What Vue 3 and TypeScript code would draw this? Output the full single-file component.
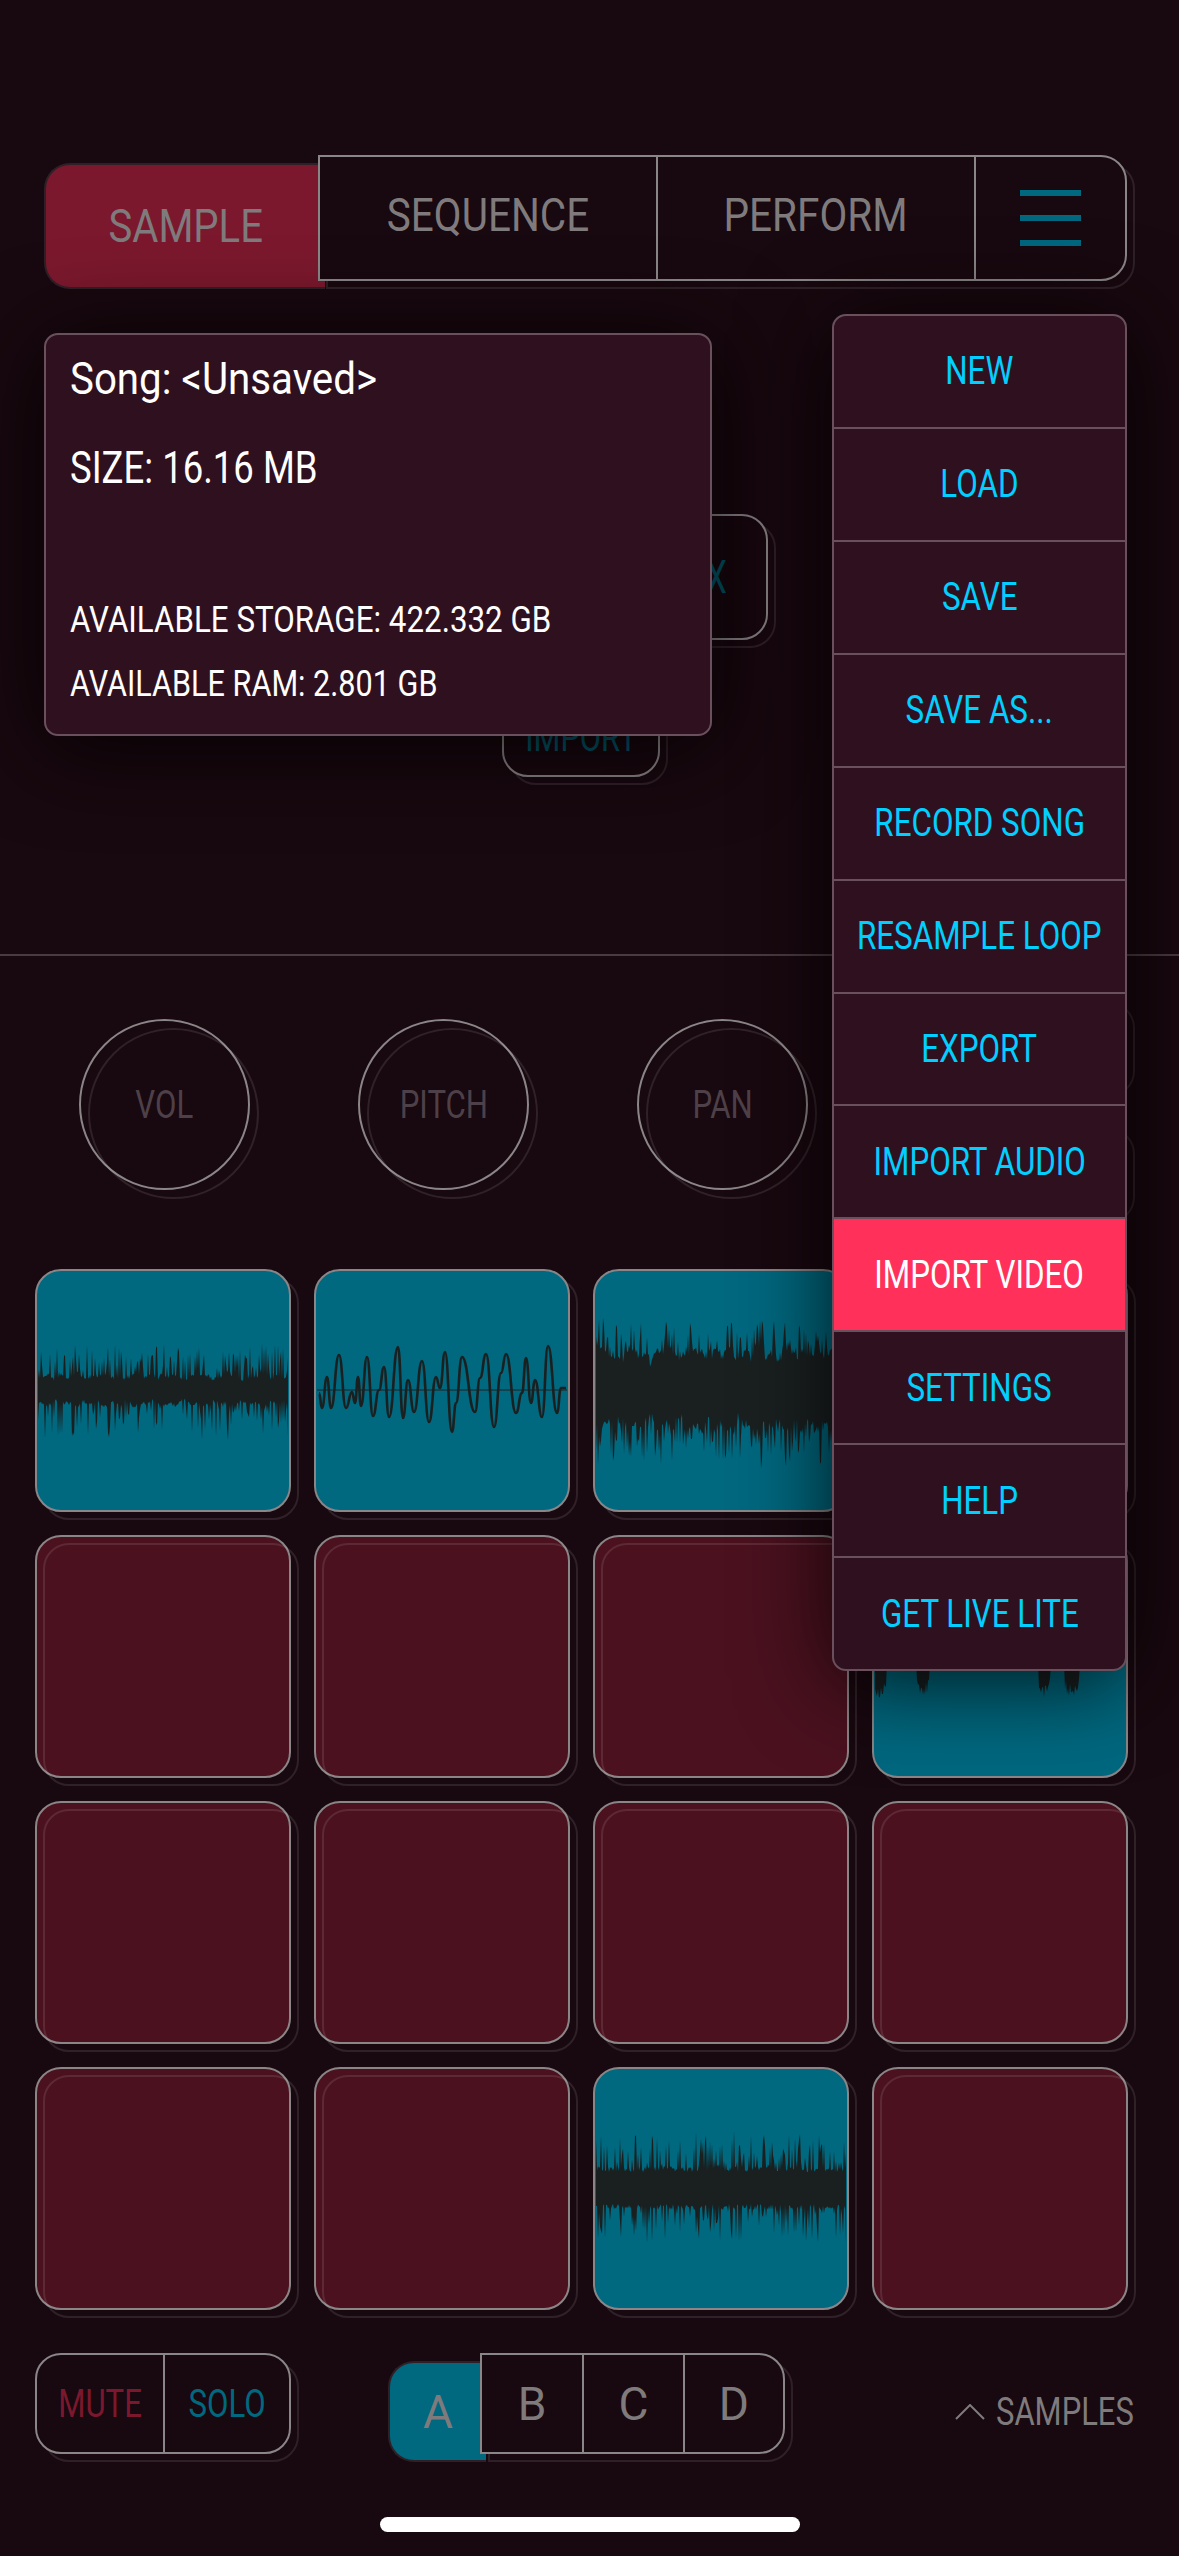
<template>
  <div class="app">
    <div class="top-row">
      <div class="sample-tab"><span class="t">SAMPLE</span></div>
      <div class="tabs outlined">
        <div class="tab tab-seq"><span class="t">SEQUENCE</span></div>
        <div class="tab tab-perf"><span class="t">PERFORM</span></div>
        <div class="tab tab-menu">
          <i></i>
          <i></i>
          <i></i>
        </div>
      </div>
    </div>

    <div class="tools">
      <div class="tool tool-x outlined"><span class="t">X</span></div>
      <div class="tool tool-import outlined"><span class="t">IMPORT</span></div>
    </div>

    <div class="divider"></div>

    <div class="knob-row">
      <div v-for="k in knobs" :key="k" class="knob"><span class="t">{{ k }}</span></div>
      <div class="side-btns">
        <div class="side-btn outlined"></div>
        <div class="side-btn outlined"></div>
      </div>
    </div>

    <div class="pads">
      <div v-for="(p, i) in pads" :key="i" class="pad" :class="p ? 'pad-on' : 'pad-off'">
        <svg v-if="p" class="wave" viewBox="2 2 252 239">
          <template v-if="p.line">
            <line x1="3" y1="121" x2="253" y2="121" stroke="#0f4350" stroke-width="2" />
            <path :d="p.line" fill="none" stroke="#1a2020" stroke-width="2.6" />
          </template>
          <path v-else :d="p.d" fill="#1a2020" />
        </svg>
      </div>
    </div>

    <div class="bottom-row">
      <div class="mute-solo outlined">
        <div class="ms-cell mute"><span class="t">MUTE</span></div>
        <div class="ms-cell solo"><span class="t">SOLO</span></div>
      </div>
      <div class="bank-a"><span>A</span></div>
      <div class="banks outlined">
        <div class="bank">B</div>
        <div class="bank">C</div>
        <div class="bank">D</div>
      </div>
      <div class="samples">
        <svg width="30" height="16" viewBox="0 0 30 16">
          <path d="M1 15 L15 1 L29 15" fill="none" stroke="#7f7b7d" stroke-width="2" />
        </svg>
        <span class="t">SAMPLES</span>
      </div>
    </div>

    <div class="home-bar"></div>

    <div class="song-panel">
      <div class="song-line song-name"><span class="t">Song: &lt;Unsaved&gt;</span></div>
      <div class="song-line size-line"><span class="t">SIZE: 16.16 MB</span></div>
      <div class="song-small storage-line"><span class="t">AVAILABLE STORAGE: 422.332 GB</span></div>
      <div class="song-small ram-line"><span class="t">AVAILABLE RAM: 2.801 GB</span></div>
    </div>

    <div class="menu">
      <div v-for="m in menuItems" :key="m" class="menu-item" :class="{ active: m === 'IMPORT VIDEO' }">
        <span class="t">{{ m }}</span>
      </div>
    </div>
  </div>
</template>

<script setup lang="ts">
type WaveOpts = {
  seed: number
  upCore: number
  downCore: number
  upSpike: number
  downSpike: number
  chance: number
  lump?: number
  hits?: number[][]
}

const knobs = ['VOL', 'PITCH', 'PAN']

const menuItems = [
  'NEW',
  'LOAD',
  'SAVE',
  'SAVE AS...',
  'RECORD SONG',
  'RESAMPLE LOOP',
  'EXPORT',
  'IMPORT AUDIO',
  'IMPORT VIDEO',
  'SETTINGS',
  'HELP',
  'GET LIVE LITE',
]

function makeRand(seed: number) {
  let s = seed
  return () => {
    s = (s * 16807) % 2147483647
    return s / 2147483647
  }
}

// upper edge left to right, then lower edge back again
function wavePath(o: WaveOpts) {
  const rand = makeRand(o.seed)
  const cy = 121
  const lump = o.lump ?? 0
  const p1 = rand() * 6
  const p2 = rand() * 6
  const up: string[] = []
  const down: string[] = []
  for (let x = 3; x <= 253; x++) {
    const slow = (Math.sin(x / 5 + p1) + Math.sin(x / 2.3 + p2)) / 2
    let u = o.upCore * (0.8 + rand() * 0.3) + lump * slow
    let d = o.downCore * (0.8 + rand() * 0.3) + lump * slow
    if (rand() < o.chance) u += rand() * o.upSpike
    if (rand() < o.chance) d += rand() * o.downSpike
    for (const h of o.hits ?? []) {
      if (x >= h[0] && x <= h[1]) d = h[2] - Math.abs(x - (h[0] + h[1]) / 2) * 1.2 - rand() * 14
    }
    up.push(`${x} ${(cy - u).toFixed(1)}`)
    down.unshift(`${x} ${(cy + d).toFixed(1)}`)
  }
  return `M${up.join('L')}L${down.join('L')}Z`
}

// turning points of the second pad's sound, read off the reference
const curve = [
  [5, 124], [8, 139], [13, 108], [17, 139], [25, 86], [32, 139], [38, 123], [41, 134], [44, 108], [47, 137],
  [53, 88], [59, 147], [65, 121], [70, 98], [75, 148], [84, 78], [89, 149], [94, 111], [100, 143], [108, 92],
  [115, 153], [122, 108], [126, 119], [131, 83], [138, 163], [142, 134], [148, 88], [161, 143], [166, 109],
  [172, 85], [180, 158], [187, 104], [192, 85], [202, 144], [208, 124], [212, 89], [217, 134], [221, 111],
  [228, 148], [234, 77], [243, 144], [247, 119], [252, 119],
]

function smoothLine(pts: number[][]) {
  let d = `M${pts[0][0]} ${pts[0][1]}`
  for (let i = 1; i < pts.length; i++) {
    const [x0, y0] = pts[i - 1]
    const [x1, y1] = pts[i]
    const mx = (x0 + x1) / 2
    d += `C${mx} ${y0} ${mx} ${y1} ${x1} ${y1}`
  }
  return d
}

const pad1 = { d: wavePath({ seed: 11, upCore: 14, downCore: 14, upSpike: 34, downSpike: 36, chance: 0.45, lump: 3 }) }
const pad2 = { line: smoothLine(curve) }
const pad3 = { d: wavePath({ seed: 29, upCore: 38, downCore: 36, upSpike: 32, downSpike: 38, chance: 0.5, lump: 8 }) }
const pad4 = {
  d: wavePath({
    seed: 5,
    upCore: 8,
    downCore: 6,
    upSpike: 10,
    downSpike: 2,
    chance: 0.2,
    hits: [
      [2, 14, 44],
      [45, 57, 42],
      [167, 178, 42],
      [193, 207, 44],
    ],
  }),
}
const pad5 = { d: wavePath({ seed: 77, upCore: 20, downCore: 20, upSpike: 36, downSpike: 36, chance: 0.42 }) }

const pads = [
  pad1, pad2, pad3, null,
  null, null, null, pad4,
  null, null, null, null,
  null, null, pad5, null,
]
</script>

<style>
html,
body {
  margin: 0;
  background: #18080f;
}
</style>

<style scoped>
.app {
  position: relative;
  isolation: isolate;
  width: 1179px;
  height: 2556px;
  overflow: hidden;
  display: flex;
  flex-direction: column;
  background: #18080f;
  font-family: 'Roboto', 'Liberation Sans', sans-serif;
  color: #7f7b7d;
}

/* no condensed face is installed, so the text is squeezed to the reference widths */
.t {
  display: inline-block;
  white-space: nowrap;
}

.outlined {
  position: relative;
  background: #18080f;
}

.outlined::after {
  content: '';
  position: absolute;
  inset: -2px;
  transform: translate(8px, 8px);
  border: 2px solid #2f2027;
  border-radius: inherit;
  z-index: -1;
}

.top-row {
  display: flex;
  align-items: flex-start;
  padding: 155px 0 0 44px;
}

.sample-tab {
  width: 281px;
  height: 126px;
  margin-top: 8px;
  box-sizing: border-box;
  display: flex;
  align-items: center;
  justify-content: center;
  background: #7b182d;
  border: 2px solid #2f2027;
  border-right: 0;
  border-radius: 26px 0 0 26px;
  font-size: 46px;
}

.sample-tab .t {
  transform: scaleX(0.87);
}

.tabs {
  display: grid;
  grid-template-columns: 336px 318px 151px;
  height: 126px;
  box-sizing: border-box;
  margin-left: -7px;
  border: 2px solid #8a8587;
  border-radius: 0 26px 26px 0;
}

.tab {
  display: flex;
  align-items: center;
  justify-content: center;
  font-size: 46px;
  padding-bottom: 6px;
}

.tab .t {
  transform: scaleX(0.88);
}

.tab-perf,
.tab-menu {
  border-left: 2px solid #8a8587;
}

.tab-menu {
  flex-direction: column;
  gap: 19px;
  padding-bottom: 0;
}

.tab-menu i {
  display: block;
  width: 61px;
  height: 6px;
  background: #00687f;
}

.tools {
  margin-top: 225px;
  display: flex;
  flex-direction: column;
}

.tool {
  box-sizing: border-box;
  border: 2px solid #8a8587;
  border-radius: 26px;
  display: flex;
  align-items: center;
  color: #00586c;
}

.tool-x {
  width: 268px;
  height: 126px;
  margin-left: 500px;
  justify-content: flex-end;
  padding-right: 39px;
  font-size: 46px;
}

.tool-x .t {
  transform: scaleX(0.72);
  transform-origin: right center;
}

.tool-import {
  width: 158px;
  height: 78px;
  margin: 59px 0 0 502px;
  justify-content: center;
  font-size: 38px;
}

.tool-import .t {
  transform: scaleX(0.81);
}

.divider {
  height: 2px;
  margin-top: 177px;
  background: #4a3a42;
}

.knob-row {
  display: flex;
  align-items: flex-start;
  gap: 108px;
  padding: 38px 0 0 79px;
}

.knob {
  position: relative;
  width: 171px;
  height: 171px;
  margin-top: 25px;
  box-sizing: border-box;
  border: 2px solid #8a8587;
  border-radius: 50%;
  display: flex;
  align-items: center;
  justify-content: center;
  font-size: 38px;
  color: #4e4048;
}

.knob .t {
  transform: scaleX(0.82);
}

.knob::after {
  content: '';
  position: absolute;
  inset: -2px;
  transform: translate(9px, 9px);
  border: 2px solid rgba(255, 255, 255, 0.1);
  border-radius: 50%;
}

.side-btns {
  display: flex;
  flex-direction: column;
  gap: 31px;
  margin-left: -16px;
}

.side-btn {
  width: 227px;
  height: 95px;
  box-sizing: border-box;
  border: 2px solid #8a8587;
  border-radius: 26px;
}

.pads {
  display: grid;
  grid-template-columns: repeat(4, 256px);
  grid-auto-rows: 243px;
  gap: 23px;
  margin-top: 54px;
  padding-left: 35px;
}

.pad {
  position: relative;
  box-sizing: border-box;
  border: 2px solid #8a8587;
  border-radius: 26px;
}

.pad::after {
  content: '';
  position: absolute;
  inset: -2px;
  transform: translate(8px, 8px);
  border: 2px solid rgba(255, 255, 255, 0.1);
  border-radius: 26px;
}

.pad-off {
  background: #4b111f;
}

.pad-on {
  background: #00687f;
}

.pad-on::after {
  z-index: -1;
}

.wave {
  display: block;
  width: 252px;
  height: 239px;
  border-radius: 24px;
}

.bottom-row {
  display: flex;
  align-items: flex-start;
  margin-top: 43px;
  padding: 0 45px 0 35px;
}

.mute-solo {
  display: grid;
  grid-template-columns: 1fr 1fr;
  width: 256px;
  height: 101px;
  box-sizing: border-box;
  border: 2px solid #8a8587;
  border-radius: 26px;
}

.ms-cell {
  display: flex;
  align-items: center;
  justify-content: center;
  font-size: 38px;
}

.ms-cell .t {
  transform: scaleX(0.82);
}

.mute {
  color: #7b182d;
}

.solo {
  color: #00687f;
  border-left: 2px solid #8a8587;
}

.bank-a {
  width: 98px;
  height: 101px;
  margin: 8px 0 0 97px;
  box-sizing: border-box;
  display: flex;
  align-items: center;
  justify-content: center;
  background: #00687f;
  border: 2px solid #2f2027;
  border-right: 0;
  border-radius: 26px 0 0 26px;
  font-size: 46px;
}

.banks {
  display: grid;
  grid-template-columns: repeat(3, 1fr);
  width: 305px;
  height: 101px;
  box-sizing: border-box;
  margin-left: -6px;
  border: 2px solid #8a8587;
  border-radius: 0 26px 26px 0;
}

.bank {
  display: flex;
  align-items: center;
  justify-content: center;
  font-size: 46px;
}

.bank + .bank {
  border-left: 2px solid #8a8587;
}

.samples {
  display: flex;
  align-items: center;
  gap: 11px;
  margin: 36px 0 0 auto;
  font-size: 38px;
  line-height: 46px;
}

.samples .t {
  width: 138px;
  transform: scaleX(0.815);
  transform-origin: left center;
}

.home-bar {
  width: 420px;
  height: 15px;
  margin: 55px auto 0;
  background: #fff;
  border-radius: 8px;
}

.song-panel {
  position: absolute;
  left: 44px;
  top: 333px;
  width: 668px;
  height: 403px;
  box-sizing: border-box;
  padding: 14px 0 0 24px;
  background: #2f101e;
  border: 2px solid #6a505c;
  border-radius: 14px;
  box-shadow: 0 10px 90px rgba(0, 0, 0, 0.8);
  color: #fff;
}

.song-panel .t {
  transform-origin: left center;
}

.song-line {
  font-size: 44px;
  line-height: 60px;
}

.song-name .t {
  transform: scaleX(0.915);
}

.size-line {
  margin-top: 29px;
}

.size-line .t {
  transform: scaleX(0.83);
}

.song-small {
  font-size: 36px;
  line-height: 60px;
}

.storage-line {
  margin-top: 92px;
}

.storage-line .t {
  transform: scaleX(0.87);
}

.ram-line {
  margin-top: 4px;
}

.ram-line .t {
  transform: scaleX(0.85);
}

.menu {
  position: absolute;
  left: 832px;
  top: 314px;
  width: 295px;
  height: 1357px;
  box-sizing: border-box;
  display: flex;
  flex-direction: column;
  overflow: hidden;
  background: #2f101e;
  border: 2px solid #6a505c;
  border-radius: 14px;
  box-shadow: 0 10px 90px rgba(0, 0, 0, 0.8);
}

.menu-item {
  flex: 1 1 0;
  box-sizing: border-box;
  display: flex;
  align-items: center;
  justify-content: center;
  font-size: 38px;
  color: #00cfff;
  border-bottom: 2px solid #6a505c;
}

.menu-item .t {
  transform: scaleX(0.825);
}

.menu-item:last-child {
  border-bottom: 0;
}

.menu-item.active {
  margin: 0 -2px;
  background: #ff3059;
  color: #fff;
}
</style>
